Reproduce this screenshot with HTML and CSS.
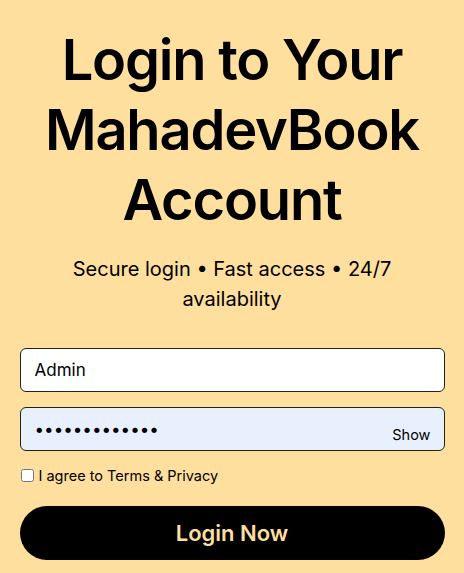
FILE: index.html
```html
<!DOCTYPE html>
<html lang="en">
<head>
    <meta charset="UTF-8">
    <meta name="viewport" content="width=device-width, initial-scale=1.0">
    <title>MahadevBook Login</title>
    <link rel="stylesheet" href="styles.css">
</head>
<body>

<div class="login-page">
    <h1 class="login-title">Login to Your MahadevBook Account</h1>
    <p class="login-subtitle">Secure login • Fast access • 24/7 availability</p>

    <form class="login-form" onsubmit="return false;">
        <input class="field" type="text" value="Admin">
        <div class="password-wrap">
            <input class="field field-filled" type="password" value="Admin@1234567">
            <span class="show-toggle">Show</span>
        </div>
        <label class="agree">
            <input type="checkbox">
            <span>I agree to Terms &amp; Privacy</span>
        </label>
        <button class="login-button" type="submit">Login Now</button>
    </form>
</div>

</body>
</html>
```

FILE: styles.css
```css
body {
    margin: 0;
    background-color: #ffdf9e;
    font-family: Inter, "Noto Sans", Arial, sans-serif;
    color: #000;
}
.login-page {
    padding: 25px 19.5px 0;
}
.login-title {
    margin: 0;
    font-size: 56px;
    line-height: 70px;
    font-weight: 600;
    text-align: center;
    letter-spacing: -1.2px;
}
.login-subtitle {
    max-width: 360px;
    margin: 19px auto 34px;
    font-size: 20px;
    line-height: 30px;
    text-align: center;
}
.login-form {
    display: flex;
    flex-direction: column;
}
.field {
    box-sizing: border-box;
    width: 100%;
    height: 44px;
    padding: 0 14px;
    border: 1px solid #222;
    border-radius: 6px;
    background: #fff;
    font-family: Inter, Arial, sans-serif;
    font-size: 17px;
    color: #000;
    outline: none;
}
.field-filled {
    background: #e8f0fe;
}
.password-wrap {
    position: relative;
    margin-top: 15px;
}
.show-toggle {
    position: absolute;
    right: 14px;
    bottom: 8px;
    font-size: 14.5px;
    cursor: pointer;
}
.agree {
    display: flex;
    align-items: center;
    gap: 5px;
    margin-top: 16px;
    font-size: 14.5px;
}
.agree input {
    width: 13px;
    height: 13px;
    margin: 0 0 0 1px;
}
.login-button {
    margin-top: 22px;
    height: 54px;
    border: none;
    border-radius: 27px;
    background: #000;
    color: #ffdf9e;
    font-family: Inter, Arial, sans-serif;
    font-size: 22px;
    font-weight: 600;
    cursor: pointer;
}
```
